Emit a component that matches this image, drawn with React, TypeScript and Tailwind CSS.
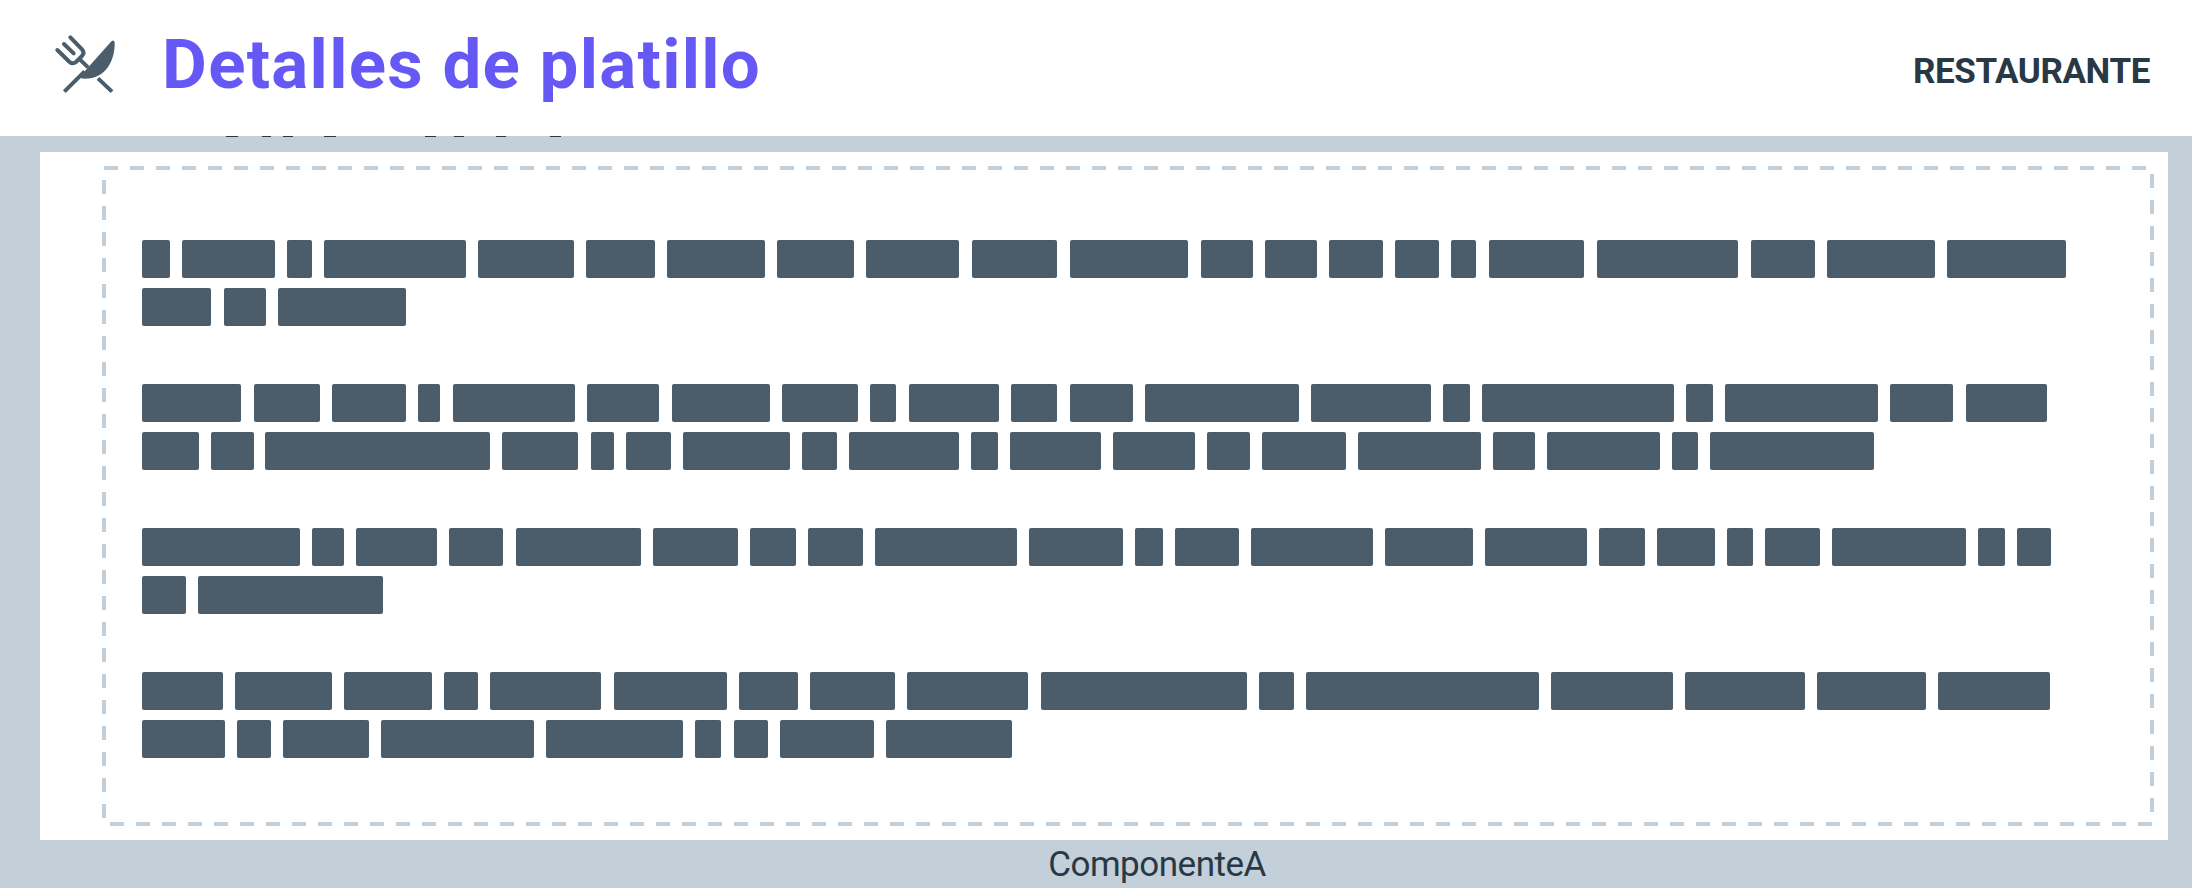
type Span = [number, number];

const TEXT_LEFT = 142;

const paragraphs: Span[][][] = [
  [
    [[142, 169.6], [182.2, 274.7], [287.1, 311.9], [323.9, 465.8], [478.2, 574.1], [586.5, 655], [666.9, 765.1], [777.5, 853.7], [866.1, 959.6], [972.2, 1057.6], [1070, 1188.5], [1200.9, 1253], [1265.1, 1317], [1329, 1383.2], [1395.5, 1439.2], [1451.6, 1476.4], [1489.1, 1584.7], [1597.4, 1738.6], [1751.1, 1815.6], [1827.6, 1935], [1947.5, 2065.8]],
    [[142, 211.4], [223.8, 266], [278.2, 405.6]],
  ],
  [
    [[142, 241.2], [253.6, 320.3], [332.4, 405.7], [417.8, 440.5], [452.9, 574.7], [586.8, 658.9], [671.7, 769.6], [782, 857.9], [870, 896.5], [908.9, 999.1], [1011.6, 1057.5], [1070.3, 1133.2], [1145.6, 1299], [1311.1, 1431.6], [1443.4, 1469.9], [1482, 1674], [1686.4, 1712.9], [1725, 1878.1], [1890.5, 1953.6], [1966.1, 2047.1]],
    [[142, 199.1], [211.2, 253.6], [265.4, 489.9], [502, 578.2], [590.7, 613.6], [625.7, 671], [683.1, 790.3], [802.4, 836.8], [849.3, 959.3], [971.4, 998.2], [1010.3, 1100.9], [1112.8, 1195], [1207.5, 1249.9], [1262.3, 1345.9], [1358, 1481.1], [1493.2, 1535.3], [1547.1, 1660], [1672.1, 1698.2], [1710.3, 1874.2]],
  ],
  [
    [[142, 299.8], [312, 343.9], [356.3, 437], [449.1, 503.3], [515.7, 640.7], [653.2, 738], [750.1, 796], [808.1, 862.7], [875.1, 1016.7], [1028.8, 1123], [1135.1, 1163.5], [1175.3, 1239], [1251.1, 1373.6], [1385.4, 1473.1], [1485.2, 1587.6], [1599.4, 1645], [1656.8, 1714.8], [1727.2, 1753.4], [1765.5, 1820], [1832.1, 1966.1], [1978.2, 2005], [2017.1, 2051.5]],
    [[142, 185.7], [197.8, 382.8]],
  ],
  [
    [[142, 223.3], [235.4, 331.7], [344.2, 431.9], [443.7, 477.8], [490.2, 601.5], [613.9, 727.1], [739.3, 797.9], [810.1, 894.6], [906.7, 1028.5], [1040.9, 1246.9], [1259.1, 1294.3], [1306.1, 1539.4], [1551.6, 1673.5], [1685.3, 1804.7], [1817.3, 1925.9], [1937.7, 2049.9]],
    [[142, 224.6], [236.7, 271.1], [283.3, 368.7], [380.8, 533.6], [545.7, 683.1], [695.3, 721.4], [734.2, 768], [780.1, 873.8], [886.6, 1012.2]],
  ],
];

const captionEdges: Span[] = [[226, 238], [262, 271], [283, 293], [324, 336], [425, 436], [454, 464], [496, 506], [550, 561]];

function Bars({ spans, origin, className }: { spans: Span[]; origin: number; className: string }) {
  return (
    <div className="flex">
      {spans.map(([start, end], i) => (
        <span
          key={start}
          className={className}
          style={{ marginLeft: start - (i ? spans[i - 1][1] : origin), width: end - start }}
        />
      ))}
    </div>
  );
}

function CutleryIcon() {
  return (
    <svg className="h-[90px] w-[90px] shrink-0" viewBox="-2 -2 270 270" fill="none" stroke="#4b5c6a" strokeWidth="12">
      <path d="M89 50L124 86Q133 96 124 106L106 124Q96 132 86 123L50 88" strokeLinecap="round" />
      <path d="M70 70L99 98" strokeLinecap="round" />
      <path d="M115 114L142 140" />
      <path d="M172 173L214 213" />
      <path d="M71 213L132 152" />
      <path
        d="M213 61Q221 56 222 66C223 118 196 174 132 174Q120 174 116 170Z"
        fill="#4b5c6a"
        stroke="none"
      />
    </svg>
  );
}

export default function App() {
  return (
    <div className="flex h-[888px] w-[2192px] flex-col overflow-hidden bg-[#c3cfd9] font-['Roboto',sans-serif] text-[#293845]">
      <header className="flex h-[136px] shrink-0 bg-white pl-10 pr-[42px]">
        <div className="pt-5">
          <CutleryIcon />
        </div>
        <h1 className="ml-8 mt-[25px] whitespace-nowrap text-[69px] font-bold leading-[80px] tracking-[1.3px] text-[#6558f5]">
          Detalles de platillo
        </h1>
        <p className="ml-auto mt-[52px] whitespace-nowrap text-[35px] font-bold leading-[40px] tracking-[-0.4px]">
          RESTAURANTE
        </p>
      </header>

      <div className="h-4 shrink-0">
        <Bars spans={captionEdges} origin={0} className="h-px shrink-0 bg-[#293845]" />
      </div>

      <main className="relative ml-10 h-[688px] w-[2128px] shrink-0 bg-white pl-[102px] pt-[88px]">
        <svg className="pointer-events-none absolute inset-0 h-full w-full" viewBox="0 0 2128 688" fill="none">
          <rect x="64" y="16" width="2048" height="656" stroke="#c3cfd9" strokeWidth="4" strokeDasharray="14 12" />
        </svg>
        <div className="flex flex-col gap-[58px]">
          {paragraphs.map((lines, p) => (
            <div key={p} className="flex flex-col gap-[10px]">
              {lines.map((spans, l) => (
                <Bars key={l} spans={spans} origin={TEXT_LEFT} className="h-[38px] shrink-0 rounded-[2px] bg-[#4b5c6a]" />
              ))}
            </div>
          ))}
        </div>
      </main>

      <footer className="flex h-12 shrink-0 justify-center pl-[122px] pt-px">
        <span className="text-[35px] leading-[48px] tracking-[-0.5px]">ComponenteA</span>
      </footer>
    </div>
  );
}
